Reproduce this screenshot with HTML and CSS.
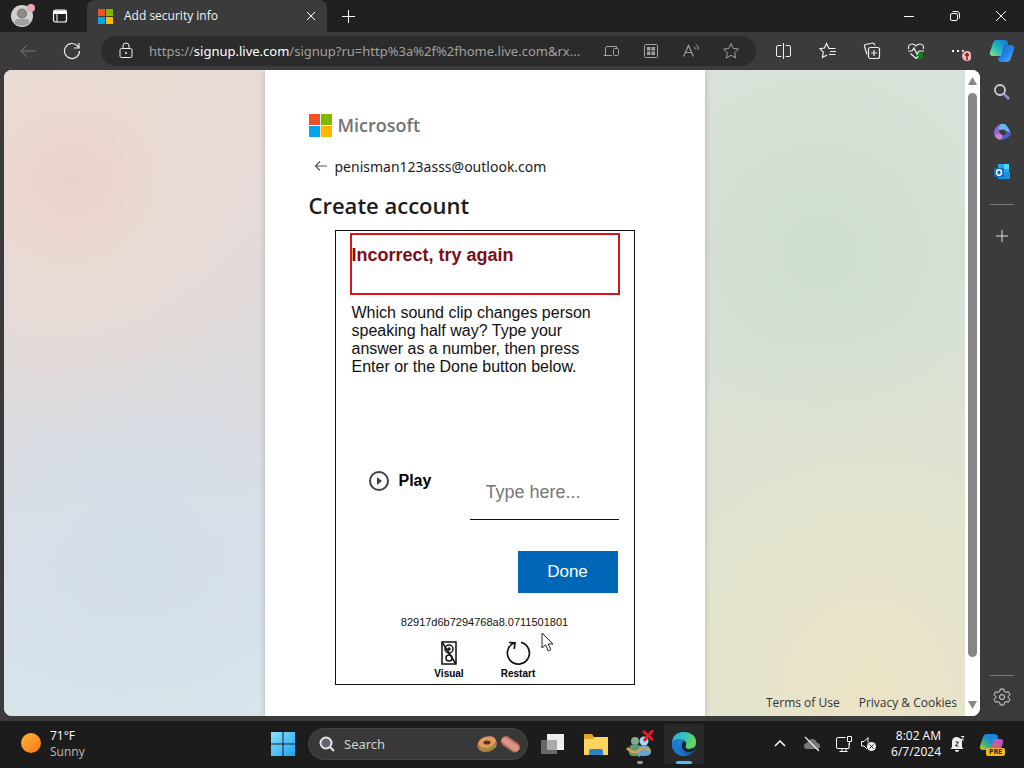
FILE: index.html
```
<!DOCTYPE html>
<html lang="en">
<head>
<meta charset="utf-8">
<meta name="viewport" content="width=device-width, initial-scale=1">
<title>Add security info</title>
<link rel="stylesheet" href="styles.css">
</head>
<body>
<div class="desktop">
  <header class="browser">
    <div class="tabbar">
      <button class="profile" aria-label="Profile">
        <svg width="26" height="26" viewBox="0 0 26 26"><circle cx="13" cy="13" r="11" fill="#d2d0cf"/><circle cx="13" cy="10.500" r="4.500" fill="#8f8d8c" stroke="#6f6d6c"/><path d="M5.500 20q0-4 4-4h7q4 0 4 4a11 11 0 0 1-15 0z" fill="#a3a1a0"/><circle cx="22" cy="5" r="4" fill="#eda6ac"/></svg>
      </button>
      <button class="workspaces" aria-label="Workspaces">
        <svg class="line" width="16" height="16" viewBox="0 0 16 16"><rect x="1.500" y="2" width="13" height="12" rx="2" stroke-width="1.200"/><path d="M2 3.500h12M2 5h12" stroke-width="2"/><path d="M5 5v9"/></svg>
      </button>
      <div class="tab">
        <svg width="15" height="15" viewBox="0 0 15 15"><path fill="#f25022" d="M0 0h7v7H0z"/><path fill="#7fba00" d="M8 0h7v7H8z"/><path fill="#00a4ef" d="M0 8h7v7H0z"/><path fill="#ffb900" d="M8 8h7v7H8z"/></svg>
        <span class="tab-title">Add security info</span>
        <button class="tab-close" aria-label="Close tab"><svg class="line" width="10" height="10" viewBox="0 0 10 10"><path d="M1 1l8 8M9 1L1 9"/></svg></button>
      </div>
      <button class="new-tab" aria-label="New tab"><svg class="line" width="16" height="16" viewBox="0 0 16 16"><path d="M8.500 2v13M2 8.500h13"/></svg></button>
      <div class="window-controls">
        <button aria-label="Minimize"><svg class="line" width="12" height="12" viewBox="0 0 12 12"><path d="M1 6.500h10"/></svg></button>
        <button aria-label="Restore"><svg class="line" width="12" height="12" viewBox="0 0 12 12"><rect x="1.500" y="3.500" width="7" height="7" rx="1.500"/><path d="M3.500 1.500h4.500q2.500 0 2.500 2.500v4.500"/></svg></button>
        <button aria-label="Close"><svg class="line" width="12" height="12" viewBox="0 0 12 12"><path d="M1 1l10 10M11 1L1 11"/></svg></button>
      </div>
    </div>

    <div class="toolbar">
      <button class="dim" aria-label="Back"><svg class="line" width="18" height="18" viewBox="0 0 18 18"><path d="M17 9H2M8 3L2 9l6 6"/></svg></button>
      <button aria-label="Refresh"><svg class="line" width="18" height="18" viewBox="0 0 18 18"><path d="M16.500 9A7.500 7.500 0 1 1 14.600 4L16 5.500M16 1v5h-5" stroke-width="1.200"/></svg></button>
      <div class="address">
        <button aria-label="Site information"><svg class="line bright" width="16" height="18" viewBox="0 0 16 18"><rect x="2" y="6.500" width="12" height="9" rx="1.500"/><path d="M5 6.500V4q0-3 3-3t3 3v2.500"/><circle cx="8" cy="11" r=".7"/></svg></button>
        <a class="url" href="#">https://<b>signup.live.com</b>/signup?ru=http%3a%2f%2fhome.live.com&amp;rx...</a>
        <button aria-label="Send to device"><svg class="line" width="18" height="16" viewBox="0 0 18 16"><path d="M10 12.500H1.500M3.500 12V5q0-1.500 1.500-1.500h9.500V5"/><rect x="11.500" y="5.500" width="5" height="7" rx="1"/></svg></button>
        <button aria-label="Apps"><svg class="line" width="16" height="16" viewBox="0 0 16 16"><rect x="1.500" y="1.500" width="13" height="13" rx="1"/><path d="M4 4h3.500v3.500H4zM8.500 4H12v3.500H8.500zM4 8.500h3.500V12H4zM8.500 8.500H12V12H8.500z" fill="currentColor" stroke="none"/></svg></button>
        <button aria-label="Read aloud"><svg class="line" width="18" height="16" viewBox="0 0 18 16"><path d="M1.500 13.500L6.500 2.500l5 11M3.500 9.500h6" stroke-width="1.200"/><path d="M12 3.500q1.500 1 1 3M14 1.500q3 2 2 5.500"/></svg></button>
        <button aria-label="Add to favorites"><svg class="line" width="18" height="18" viewBox="0 0 18 18"><path d="M9 1.500l2.300 5 5.200.600-3.900 3.600 1.100 5.300L9 13.300 4.300 16l1.100-5.300L1.500 7.100l5.200-.6z"/></svg></button>
      </div>
      <button aria-label="Split screen"><svg class="line" width="18" height="18" viewBox="0 0 18 18"><path d="M6.500 3.500H3q-1.500 0-1.500 1.500v8q0 1.500 1.500 1.500h3.500M10.500 3.500H14q1.500 0 1.500 1.500v8q0 1.500-1.500 1.500h-3.500M8.500 1v16"/></svg></button>
      <button aria-label="Favorites"><svg class="line" width="18" height="18" viewBox="0 0 18 18"><path d="M16.500 6.500H10L7.500 1.500 5.500 6l-4.500.7 3.300 3.500-.8 5.300L8 13M11 9.500h6M10 12.500h6.500" stroke-width="1.200"/></svg></button>
      <button aria-label="Collections"><svg class="line" width="18" height="18" viewBox="0 0 18 18"><rect x="5.500" y="5.500" width="11" height="11" rx="2" stroke-width="1.200"/><path d="M11 8v6M8 11h6M4 12.500L1.500 4.500Q1 3 2.500 2.500L10 1q1.500 0 2 2.500" stroke-width="1.200"/></svg></button>
      <button aria-label="Browser essentials"><svg class="line" width="18" height="18" viewBox="0 0 18 18"><circle cx="12.500" cy="13.500" r="3.500" fill="#128522" stroke="none"/><path d="M1.500 7Q1 2 5 2q2.500 0 4 2 1.500-2 4-2 4 0 3.500 5M1 9h4l2-3 3 6 2-3h5M3.500 11.500L9 16.500l2-2" stroke-width="1.200"/></svg></button>
      <button aria-label="Settings and more"><svg width="22" height="22" viewBox="0 0 22 22"><path d="M3 10h2v2H3zM8 10h2v2H8zM13 10h2v2h-2z" fill="#fff"/><circle cx="18" cy="16" r="5.500" fill="#f3b8ba" stroke="#3b3b3b"/><path d="M18 20v-6M16 15.500l2-2 2 2" stroke="#8c1822" stroke-width="1.500" fill="none"/></svg></button>
      <button class="copilot" aria-label="Copilot"><svg width="26" height="24" viewBox="0 0 26 24"><defs><linearGradient id="c1" x1="0" y1="1" x2="1" y2="0"><stop stop-color="#8ae47b"/><stop offset=".45" stop-color="#20b9c4"/><stop offset="1" stop-color="#1670d0"/></linearGradient><linearGradient id="c2" x1="0" y1="0" x2="1" y2="1"><stop stop-color="#1555c4"/><stop offset=".6" stop-color="#278bf2"/><stop offset="1" stop-color="#67b8ff"/></linearGradient></defs><path d="M7 1h9q3 0 3 4l-4 9q-1 3-4 3H4q-4 0-3-4L4 4q1-3 3-3z" fill="url(#c1)"/><path d="M16 6h5q5 0 4 4l-3 9q-1 4-5 4h-4q-4 0-4-4 3-1 4-5l1-5q.5-3 2-3z" fill="url(#c2)"/></svg></button>
    </div>
  </header>

  <div class="workspace">
    <div class="viewport">
      <main class="page">
        <div class="card">
          <div class="brand"><svg width="23" height="23" viewBox="0 0 23 23"><path fill="#f25022" d="M0 0h11v11H0z"/><path fill="#7fba00" d="M12 0h11v11H12z"/><path fill="#00a4ef" d="M0 12h11v11H0z"/><path fill="#ffb900" d="M12 12h11v11H12z"/></svg><span>Microsoft</span></div>
          <div class="identity">
            <button aria-label="Back"><svg width="14" height="12" viewBox="0 0 14 12" fill="none" stroke="#555" stroke-width="1.200"><path d="M13 6H1.500M6 1.500L1.500 6 6 10.500"/></svg></button>
            <span>penisman123asss@outlook.com</span>
          </div>
          <h1>Create account</h1>
          <form class="challenge">
            <div class="alert" role="alert">Incorrect, try again</div>
            <label class="question" for="answer">Which sound clip changes person speaking half way? Type your answer as a number, then press Enter or the Done button below.</label>
            <div class="response">
              <button type="button" class="play"><svg width="22" height="22" viewBox="0 0 22 22"><circle cx="11" cy="11" r="9" fill="none" stroke="#394149" stroke-width="2"/><path d="M9 7l5 4-5 4z" fill="#394149"/></svg>Play</button>
              <input id="answer" type="text" placeholder="Type here...">
            </div>
            <button type="button" class="done">Done</button>
            <p class="token">82917d6b7294768a8.0711501801</p>
            <div class="modes">
              <button type="button"><svg width="26" height="26" viewBox="0 0 26 26" fill="none" stroke="#111" stroke-width="1.500"><rect x="6" y="2" width="14" height="22"/><circle cx="13" cy="9" r="4"/><circle cx="13" cy="18" r="3"/><circle cx="13" cy="9" r="1"/><path d="M6 2l14 22"/></svg>Visual</button>
              <button type="button"><svg width="26" height="26" viewBox="0 0 26 26" fill="none" stroke="#111" stroke-width="1.700"><path d="M16 2.400A11 11 0 1 1 9 3M4 2.500l6 .3-.8 6"/></svg>Restart</button>
            </div>
          </form>
        </div>
        <footer class="legal"><a href="#">Terms of Use</a><a href="#">Privacy &amp; Cookies</a></footer>
      </main>
      <div class="scrollbar" aria-hidden="true"><i class="up"></i><i class="thumb"></i><i class="down"></i></div>
    </div>
    <aside class="sidebar">
      <button aria-label="Search"><svg width="18" height="18" viewBox="0 0 18 18" fill="none"><path d="M11 11l5 5" stroke="#9c8ad0" stroke-width="2.500"/><circle cx="7" cy="7" r="5" stroke="#cfcfcf" stroke-width="1.800"/></svg></button>
      <button aria-label="Microsoft 365"><svg width="18" height="18" viewBox="0 0 18 18"><path d="M8 1q4-1 6 2l3 5q1 2 0 4l-5-5q-2-1-5 0L4 7q0-4 4-6z" fill="#6bb4ee"/><path d="M8 1Q5 4 6 8l2 4-5 3q-2-2-2-6 1-6 7-8z" fill="#9368d4"/><path d="M17 9q1 4-3 6-4 3-8 1l3-4q5 0 5-4z" fill="#4b5cca"/><path d="M2 12l6-1 2 3-3 3q-4-1-5-5z" fill="#ce84d2"/></svg></button>
      <button aria-label="Outlook"><svg width="18" height="18" viewBox="0 0 18 18"><path d="M5 1h11v9H5z" fill="#28a8ea"/><path d="M11 1h5v5h-5z" fill="#50d9ff"/><path d="M4 9h13v7H5z" fill="#1490df"/><rect x="1" y="5" width="10" height="9" rx="1" fill="#0f6cbd"/><ellipse cx="6" cy="9.500" rx="2.500" ry="2.700" fill="none" stroke="#fff" stroke-width="1.500"/></svg></button>
      <hr>
      <button aria-label="Customize"><svg class="line" width="14" height="14" viewBox="0 0 14 14"><path d="M7 1v12M1 7h12"/></svg></button>
      <div class="sidebar-end">
        <hr>
        <button aria-label="Settings"><svg class="line" width="18" height="18" viewBox="0 0 18 18"><path d="M7.300 1h3.400l.6 2.400 1.700 1 2.300-.7L17 6.600l-1.700 1.700v1.400l1.700 1.700-1.700 2.900-2.300-.7-1.700 1-.6 2.400H7.300l-.6-2.400-1.700-1-2.300.7L1 11.400l1.700-1.700V8.300L1 6.600l1.700-2.900 2.300.7 1.700-1z"/><circle cx="9" cy="9" r="2.500"/></svg></button>
      </div>
    </aside>
  </div>

  <footer class="taskbar">
    <button class="weather"><svg width="22" height="22" viewBox="0 0 22 22"><defs><linearGradient id="s" x1="0" y1="0" x2="1" y2="1"><stop stop-color="#ffb235"/><stop offset="1" stop-color="#f6791f"/></linearGradient></defs><circle cx="11" cy="10" r="10" fill="url(#s)"/></svg><span><b>71°F</b><small>Sunny</small></span></button>
    <nav class="apps">
      <button aria-label="Start"><svg width="24" height="24" viewBox="0 0 24 24"><defs><linearGradient id="w" x1="0" y1="0" x2="1" y2="1"><stop stop-color="#8be0ff"/><stop offset="1" stop-color="#1ba4f0"/></linearGradient></defs><path d="M0 0h11.500v11.500H0zM12.500 0H24v11.500H12.500zM0 12.500h11.500V24H0zM12.500 12.500H24V24H12.500z" fill="url(#w)"/></svg></button>
      <label class="search">
        <svg width="16" height="16" viewBox="0 0 16 16" fill="none" stroke="#e6e6e6" stroke-width="2"><circle cx="7" cy="7" r="5.500" fill="#62656b"/><path d="M11 11l4 4"/></svg>
        <input type="text" placeholder="Search" aria-label="Search">
        <svg width="46" height="20" viewBox="0 0 46 20"><ellipse cx="11" cy="10.500" rx="10" ry="7.500" fill="#b86f38" transform="rotate(-15 11 10)"/><path d="M3 14q4 3 8 1t9-3" stroke="#8a9a45" stroke-width="2" fill="none"/><ellipse cx="11" cy="8" rx="9" ry="5.500" fill="#e09a5c" transform="rotate(-15 11 8)"/><ellipse cx="11" cy="8.500" rx="3.500" ry="2" fill="#593320"/><g transform="rotate(35 34 10)"><rect x="24" y="5" width="21" height="10" rx="5" fill="#b9745a"/><rect x="25" y="7" width="19" height="6" rx="3" fill="#dc9484"/></g></svg>
      </label>
      <button aria-label="Task view"><svg width="26" height="24" viewBox="0 0 26 24"><path d="M8 2h17v16H8z" fill="#eee"/><path d="M2 8h16v14H2z" fill="#686868"/><path d="M8 8h10v10H8z" fill="#aaa"/></svg></button>
      <button aria-label="File Explorer"><svg width="26" height="24" viewBox="0 0 26 24"><path d="M1 3q0-1 1-1h7l2 3h13q1 0 1 1v16q0 1-1 1H2q-1 0-1-1z" fill="#e2a42b"/><path d="M1 7h9l2-2h13v17q0 1-1 1H2q-1 0-1-1z" fill="#ffd35f"/><path d="M6 23v-4q0-2 2-2h10q2 0 2 2v4z" fill="#2686c8"/></svg></button>
      <button class="running" aria-label="Messenger"><svg width="28" height="28" viewBox="0 0 28 28"><circle cx="9" cy="11" r="4" fill="#7fae8f"/><path d="M3 22q-1-8 6-8t6 8-3 4H7q-4 0-4-4z" fill="#5b9a6c"/><circle cx="18" cy="11" r="4.500" fill="#a9d8f5"/><path d="M11 24q0-9 7-9t7 8q-1 3-7 3-6 0-7-2z" fill="#66a5cc"/><path d="M1 18q7 7 13 2 5-4 10 1" stroke="#d0a44b" stroke-width="2.500" fill="none"/><path d="M17 1l10 9M27 0l-9 11" stroke="#e51d27" stroke-width="3"/></svg></button>
      <button class="running active" aria-label="Edge"><svg width="26" height="26" viewBox="0 0 26 26"><defs><linearGradient id="e1" x1="0" y1="0" x2="1" y2=".4"><stop stop-color="#2aaae3"/><stop offset=".5" stop-color="#31c5be"/><stop offset="1" stop-color="#67d65b"/></linearGradient><linearGradient id="e2" x1="0" y1="0" x2="1" y2="1"><stop stop-color="#2d9cec"/><stop offset="1" stop-color="#124d9c"/></linearGradient></defs><circle cx="13" cy="13" r="12" fill="url(#e2)"/><path d="M1 12Q2 1 13 1q12 1 12 10 0 7-7 7-5 0-3-4 1-6-6-6-7 0-8 4z" fill="url(#e1)"/><path d="M15 14q-2 4 3 4 4 0 7-3l-2 4q-3 3-7 2-6-2-5-7 0-3 2-4 3 1 2 4z" fill="#20242b"/><path d="M9 8q-5 4-2 10t10 6q-7 3-12-2T1 12q2-4 8-4z" fill="#1c79cf"/></svg></button>
    </nav>
    <div class="tray">
      <button aria-label="Show hidden icons"><svg class="line" width="12" height="12" viewBox="0 0 12 12"><path d="M1 8l5-5 5 5" stroke-width="1.500"/></svg></button>
      <button aria-label="OneDrive"><svg width="18" height="16" viewBox="0 0 18 16"><path d="M4 13q-3 0-3-3t3-3q1-4 5-4t5 4q3 0 3 3t-3 3z" fill="#777"/><path d="M2 1l14 14" stroke="#eee" stroke-width="1.300"/></svg></button>
      <span class="status">
        <svg class="line" width="18" height="18" viewBox="0 0 18 18"><path d="M10.500 2.500H3q-1.500 0-1.500 1.500v8q0 1.500 1.500 1.500h11V8M7 13.500v3M11 13.500v3M4.500 16.500h8"/><path d="M12.500 1.500h4v5h-4zM14.500 6.500V10"/></svg>
        <svg class="line" width="18" height="18" viewBox="0 0 18 18"><path d="M7 14L4 11H1.500V6.500H4l4-4v5"/><circle cx="11.500" cy="11.500" r="4.500" fill="#eee" stroke="none"/><path d="M9.500 9.500l4 4M13.500 9.500l-4 4" stroke="#222"/></svg>
      </span>
      <button class="clock"><time datetime="2024-06-07T08:02">8:02 AM<br>6/7/2024</time></button>
      <button aria-label="Notifications"><svg width="16" height="18" viewBox="0 0 16 18"><path d="M3 12V7q0-5 5-5 5 1 5 5v5l1.500 2h-13z" fill="#eee"/><path d="M6 15h4q0 2-2 2t-2-2z" fill="#eee"/><path d="M6.500 7h3l-3 4h3" stroke="#222" fill="none"/><path d="M12 1.500h3l-3 3.500h3" stroke="#eee" fill="none"/></svg></button>
      <button class="preview" aria-label="Copilot preview"><svg width="24" height="22" viewBox="0 0 24 22"><defs><linearGradient id="p1" x1="0" y1="1" x2="1" y2="0"><stop stop-color="#f2b545"/><stop offset=".3" stop-color="#48b871"/><stop offset=".6" stop-color="#1789e0"/></linearGradient><linearGradient id="p2" x1="0" y1="1" x2="1" y2="0"><stop stop-color="#ef6548"/><stop offset="1" stop-color="#ae55dc"/></linearGradient></defs><path d="M7 1h7q4 0 4 4l-4 9q-1 3-4 3H3q-4 0-3-4L3 4q1-3 4-3z" fill="url(#p1)"/><path d="M15 6h5q4 0 3 4l-3 8q-1 3-4 3h-6l3-12q.5-3 2-3z" fill="url(#p2)"/></svg><span>PRE</span></button>
    </div>
  </footer>
  <svg class="cursor" width="14" height="20" viewBox="0 0 14 20" aria-hidden="true"><path d="M1 1v15l3.600-3.200L7.200 19l2.600-1.200-2.600-5.800h4.800z" fill="#fff" stroke="#222"/></svg>
</div>
</body>
</html>
```
FILE: styles.css
```
* { box-sizing: border-box; }
body { margin: 0; font-family: "Noto Sans", sans-serif; font-size: 12px; color: #fff; background: #1c1c1c; }
button { display: flex; align-items: center; justify-content: center; padding: 0; border: 0; background: none; color: inherit; font: inherit; }
a { color: inherit; text-decoration: none; }
svg { display: block; flex: none; }
.line { fill: none; stroke: currentColor; }
.desktop { position: relative; display: flex; flex-direction: column; min-height: 100vh; }

.tabbar { display: flex; align-items: center; height: 32px; background: #202020; }
.profile { width: 44px; }
.workspaces { width: 32px; }
.tab { display: flex; align-items: center; gap: 11px; width: 240px; height: 32px; margin-left: 11px; padding: 0 10px 0 11px; border-radius: 8px 8px 0 0; background: #3b3b3b; }
.tab-title { flex: 1; color: #f2f2f2; font: 12px/16px "Open Sans", sans-serif; }
.tab-close { width: 12px; height: 20px; }
.new-tab { width: 42px; }
.window-controls { display: flex; margin-left: auto; }
.window-controls button { width: 46px; height: 32px; }

.toolbar { display: flex; align-items: center; height: 38px; padding-left: 6px; background: #3b3b3b; color: #eee; }
.toolbar > button { width: 44px; height: 36px; flex: none; }
.toolbar > .copilot { width: 40px; margin-right: 2px; }
.dim { color: #777; }
.address { display: flex; align-items: center; flex: 1; min-width: 0; height: 30px; margin: 0 6px 0 7px; padding: 0 5px; border-radius: 15px; background: #2b2b2b; color: #a0a0a0; }
.address button { width: 40px; flex: none; }
.bright { color: #eee; }
.url { flex: 1; min-width: 0; margin-left: 3px; overflow: hidden; white-space: nowrap; font-size: 13px; }
.url b { font-weight: 400; color: #fff; }

.workspace { display: flex; flex: 1; padding: 0 0 5px 4px; background: #3b3b3b; }
.viewport { display: flex; flex: 1; min-width: 0; overflow: hidden; border-radius: 8px; background: #fff; }
.page { position: relative; display: flex; flex: 1; justify-content: center; min-width: 0; color: #1b1b1b;
  background:
    radial-gradient(circle at 7% 17%, #ebd1cd 0, transparent 9%),
    radial-gradient(circle at 6% 18%, #ecdad1 0, transparent 24%),
    radial-gradient(circle at 14% 76%, #d4dee8 0, transparent 24%),
    radial-gradient(circle at 85% 28%, #cfddd0 0, transparent 22%),
    radial-gradient(circle at 90% 95%, #ebe4c6 0, transparent 36%),
    linear-gradient(90deg, transparent 50%, #d9e2d8 50%),
    linear-gradient(175deg, #e8dcd7 0, #dddadd 45%, #d9e2eb 75%, #dae8ec 100%); }
.card { width: 440px; padding: 44px 44px 31px; background: #fff; box-shadow: 0 2px 6px rgba(0, 0, 0, .2); }
.brand { display: flex; align-items: center; gap: 6px; height: 23px; color: #737373; font: 600 18px/23px "Open Sans", sans-serif; }
.identity { display: flex; align-items: center; gap: 7px; height: 24px; margin: 17px 0 11px 5px; font-size: 14px; }
h1 { margin: 0; font: 600 22px/32px "Open Sans", sans-serif; }
.challenge { display: flex; flex-direction: column; width: 300px; height: 455px; margin: 9px auto 0; padding: 2px 14px 3px; border: 1px solid #111; font-family: "Liberation Sans", Arial, sans-serif; color: #111; }
.alert { height: 62px; padding-top: 10px; border: 2px solid #d9141b; color: #7d0d12; font-size: 18px; font-weight: 700; line-height: 20px; }
.question { width: 252px; margin: 9px 0 0 2px; font-size: 16px; line-height: 18px; }
.response { display: flex; justify-content: space-between; align-items: flex-start; margin-top: auto; padding: 0 1px 0 18px; }
.play { gap: 9px; margin-top: 5px; font-size: 16px; font-weight: 700; color: #000; }
.response input { width: 149px; height: 55px; padding: 0 16px; border: 0; border-bottom: 1px solid #111; background: none; font: 18px "Liberation Sans", Arial, sans-serif; }
.response input::placeholder { color: #767676; opacity: 1; }
.done { align-self: flex-end; width: 100px; height: 42px; margin: 31px 2px 0 0; background: #0067b8; color: #fff; font-size: 17px; }
.token { margin: 22px 0 11px; text-align: center; font-size: 11px; line-height: 14px; }
.modes { display: flex; justify-content: center; gap: 29px; padding-right: 2px; }
.modes button { flex-direction: column; gap: 1px; width: 40px; font-size: 10px; line-height: 14px; font-weight: 700; color: #000; }
.legal { position: absolute; right: 8px; bottom: 4px; display: flex; gap: 19px; font: 12px/18px "Open Sans", sans-serif; color: #333; }
.scrollbar { display: flex; flex-direction: column; align-items: center; width: 15px; padding: 7px 0; background: #fff; }
.scrollbar i { width: 9px; }
.up, .down { height: 8px; background: #888; }
.up { clip-path: polygon(50% 0, 100% 100%, 0 100%); }
.down { clip-path: polygon(0 0, 100% 0, 50% 100%); }
.thumb { flex: 1; margin: 8px 0 44px; border-radius: 5px; background: #868686; }
.sidebar { display: flex; flex-direction: column; align-items: center; width: 44px; color: #ddd; }
.sidebar button { width: 40px; height: 40px; }
.sidebar > button:first-child { margin-top: 2px; }
.sidebar hr { width: 24px; margin: 12px 0 11px; border: 0; border-top: 1px solid #777; }
.sidebar-end { display: flex; flex-direction: column; align-items: center; margin-top: auto; }
.sidebar-end hr { margin: 0 0 2px; }
.sidebar-end button { height: 38px; }

.taskbar { display: grid; grid-template-columns: 263px auto 1fr; align-items: center; height: 47px; padding-bottom: 2px; background: #1c1c1c; }
.weather { justify-content: flex-start; gap: 8px; padding-left: 20px; text-align: left; line-height: 16px; font-size: 12px; }
.weather b, .weather small { display: block; font: 12px/16px "Open Sans", sans-serif; }
.weather small { color: #bbb; }
.apps { display: flex; align-items: center; }
.apps button { position: relative; width: 40px; height: 40px; margin-right: 4px; border-radius: 4px; }
.apps > button:first-child { margin-right: 5px; }
.search { display: flex; align-items: center; gap: 9px; width: 220px; height: 32px; margin-right: 4px; padding: 0 5px 0 10px; border: 1px solid #454545; border-radius: 16px; background: #383838; }
.search input { flex: 1; min-width: 0; padding: 0; border: 0; background: none; font: 13px "Noto Sans", sans-serif; color: #fff; }
.search input::placeholder { color: #d0d0d0; opacity: 1; }
.running::after { content: ""; position: absolute; bottom: 0; width: 6px; height: 3px; border-radius: 2px; background: #999; }
.apps .active { background: #292929; }
.active::after { width: 16px; background: #4cbcf5; }
.tray { display: flex; align-items: center; justify-content: flex-end; }
.tray > button { width: 32px; height: 40px; }
.status { display: flex; gap: 7px; margin: 0 13px 0 7px; }
.tray > .clock { width: auto; text-align: right; font: 12px/16px "Open Sans", sans-serif; }
.tray > .preview { position: relative; margin: 0 16px 0 3px; }
.preview span { position: absolute; right: 3px; bottom: 8px; padding: 0 3px; border-radius: 2px; background: #f4b51c; color: #222; font: 700 7px/8px "Open Sans", sans-serif; }
.cursor { position: absolute; left: 541px; top: 632px; }
```
